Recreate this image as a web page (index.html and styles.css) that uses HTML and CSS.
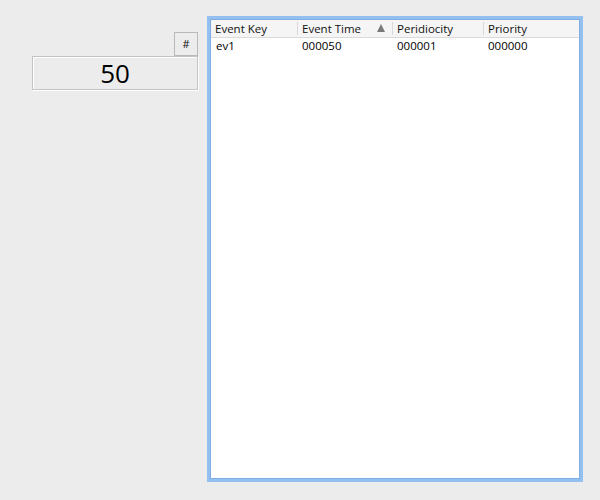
FILE: index.html
```html
<!DOCTYPE html>
<html>
<head>
<meta charset="utf-8">
<link rel="stylesheet" href="styles.css">
</head>
<body>
<div class="app">
  <div class="left">
    <div class="btn-row"><button class="hash">#</button></div>
    <div class="display">50</div>
  </div>
  <div class="frame">
    <div class="table">
      <div class="thead">
        <div class="th c1">Event Key</div>
        <div class="th c2">Event Time<span class="arrow"></span></div>
        <div class="th c3">Peridiocity</div>
        <div class="th c4">Priority</div>
      </div>
      <div class="row">
        <div class="td c1">ev1</div>
        <div class="td c2">000050</div>
        <div class="td c3">000001</div>
        <div class="td c4">000000</div>
      </div>
    </div>
  </div>
</div>
</body>
</html>
```
FILE: styles.css
```css
html, body {
  margin: 0;
  padding: 0;
  background: #ececec;
  width: 600px;
  height: 500px;
  overflow: hidden;
  font-family: "Open Sans", "Noto Sans", sans-serif;
  font-size: 11.5px;
  color: #000;
}
.app {
  display: flex;
  padding: 16px 0 0 32px;
  gap: 9px;
}
.left {
  width: 166px;
  padding-top: 16px;
  display: flex;
  flex-direction: column;
}
.btn-row {
  display: flex;
  justify-content: flex-end;
}
.hash {
  width: 24px;
  height: 24px;
  margin: 0;
  padding: 0;
  border: 1px solid #b9b9b9;
  background: #ececec;
  font-family: "Open Sans", sans-serif;
  font-size: 11px;
  font-weight: 400;
  color: #111;
  line-height: 20px;
}
.display {
  box-sizing: border-box;
  height: 34px;
  border: 1px solid #c4c4c4;
  box-shadow: inset 1px 1px 0 #fff, 1px 1px 0 #fff;
  background: #ececec;
  text-align: center;
  font-size: 26px;
  line-height: 32px;
  color: #000;
}
.frame {
  box-sizing: border-box;
  width: 376px;
  height: 466px;
  border: 3px solid #93c0f1;
  background: #fff;
  padding: 0;
}
.table {
  box-sizing: border-box;
  height: 100%;
  border: 1px solid #7eaee3;
  background: #fff;
}
.thead {
  display: flex;
  height: 17px;
  background: #f5f5f5;
  border-bottom: 1px solid #dadada;
}
.th {
  box-sizing: border-box;
  position: relative;
  padding-left: 4px;
  padding-top: 1px;
  line-height: 16px;
  white-space: nowrap;
  color: #111;
}
.th + .th {
  border-left: 1px solid #d9d9d9;
}
.thead .th + .th {
  margin-top: 2px;
  height: 13px;
  padding-top: 0;
  line-height: 14px;
}
.th.c2 {
  padding-right: 6px;
}
.arrow {
  position: absolute;
  right: 7px;
  top: 2px;
  width: 0;
  height: 0;
  border-left: 4px solid transparent;
  border-right: 4px solid transparent;
  border-bottom: 8px solid #7a7a7a;
}
.row {
  display: flex;
  height: 16px;
}
.td {
  box-sizing: border-box;
  padding-left: 5px;
  line-height: 16px;
  white-space: nowrap;
}
.c1 { width: 86px; }
.c2 { width: 95px; }
.c3 { width: 91px; }
.c4 { width: 96px; }
```
